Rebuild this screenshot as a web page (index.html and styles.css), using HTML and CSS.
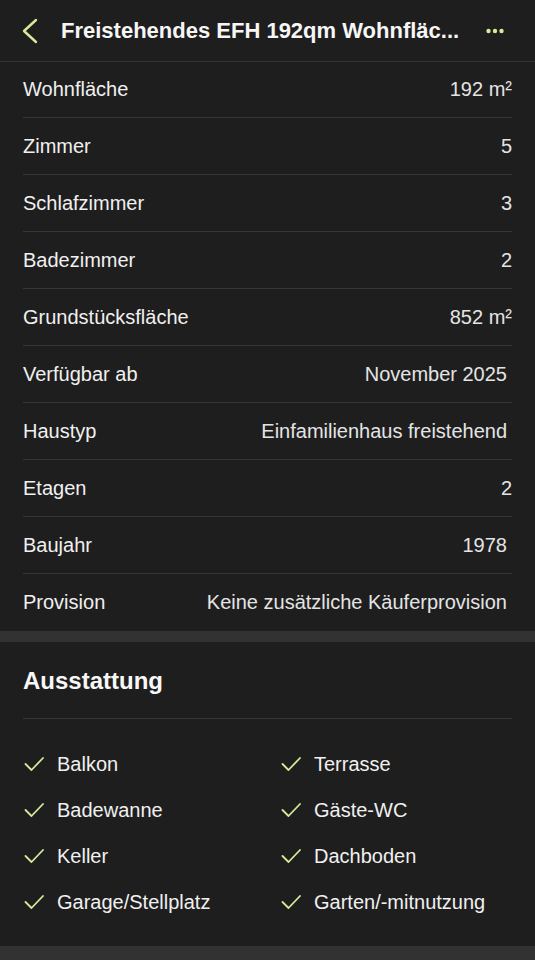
FILE: index.html
```html
<!DOCTYPE html>
<html lang="de">
<head>
<meta charset="utf-8">
<title>Freistehendes EFH</title>
<link rel="stylesheet" href="styles.css">
</head>
<body>
<header class="topbar">
  <svg class="back" width="18" height="26" viewBox="0 0 18 26"><path d="M15 2 L3 13 L15 24" fill="none" stroke="#d4eb9c" stroke-width="2.4" stroke-linecap="round" stroke-linejoin="round"/></svg>
  <h1 class="title">Freistehendes EFH 192qm Wohnfläc...</h1>
  <svg class="more" width="18" height="6" viewBox="0 0 18 6"><circle cx="2.5" cy="3" r="2.2" fill="#d4eb9c"/><circle cx="9" cy="3" r="2.2" fill="#d4eb9c"/><circle cx="15.5" cy="3" r="2.2" fill="#d4eb9c"/></svg>
</header>

<section class="specs">
  <div class="row"><span class="label">Wohnfläche</span><span class="value">192 m²</span></div>
  <div class="row"><span class="label">Zimmer</span><span class="value">5</span></div>
  <div class="row"><span class="label">Schlafzimmer</span><span class="value">3</span></div>
  <div class="row"><span class="label">Badezimmer</span><span class="value">2</span></div>
  <div class="row"><span class="label">Grundstücksfläche</span><span class="value">852 m²</span></div>
  <div class="row"><span class="label">Verfügbar ab</span><span class="value pad">November 2025</span></div>
  <div class="row"><span class="label">Haustyp</span><span class="value pad">Einfamilienhaus freistehend</span></div>
  <div class="row"><span class="label">Etagen</span><span class="value">2</span></div>
  <div class="row"><span class="label">Baujahr</span><span class="value pad">1978</span></div>
  <div class="row"><span class="label">Provision</span><span class="value pad">Keine zusätzliche Käuferprovision</span></div>
</section>

<div class="band"></div>

<section class="features">
  <h2 class="heading">Ausstattung</h2>
  <div class="list">
    <div class="item"><svg class="check" width="20" height="16" viewBox="0 0 20 16"><path d="M1.5 8 L7.5 14 L19 2" fill="none" stroke="#d4eb9c" stroke-width="1.8" stroke-linecap="round" stroke-linejoin="round"/></svg><span>Balkon</span></div>
    <div class="item"><svg class="check" width="20" height="16" viewBox="0 0 20 16"><path d="M1.5 8 L7.5 14 L19 2" fill="none" stroke="#d4eb9c" stroke-width="1.8" stroke-linecap="round" stroke-linejoin="round"/></svg><span>Terrasse</span></div>
    <div class="item"><svg class="check" width="20" height="16" viewBox="0 0 20 16"><path d="M1.5 8 L7.5 14 L19 2" fill="none" stroke="#d4eb9c" stroke-width="1.8" stroke-linecap="round" stroke-linejoin="round"/></svg><span>Badewanne</span></div>
    <div class="item"><svg class="check" width="20" height="16" viewBox="0 0 20 16"><path d="M1.5 8 L7.5 14 L19 2" fill="none" stroke="#d4eb9c" stroke-width="1.8" stroke-linecap="round" stroke-linejoin="round"/></svg><span>Gäste-WC</span></div>
    <div class="item"><svg class="check" width="20" height="16" viewBox="0 0 20 16"><path d="M1.5 8 L7.5 14 L19 2" fill="none" stroke="#d4eb9c" stroke-width="1.8" stroke-linecap="round" stroke-linejoin="round"/></svg><span>Keller</span></div>
    <div class="item"><svg class="check" width="20" height="16" viewBox="0 0 20 16"><path d="M1.5 8 L7.5 14 L19 2" fill="none" stroke="#d4eb9c" stroke-width="1.8" stroke-linecap="round" stroke-linejoin="round"/></svg><span>Dachboden</span></div>
    <div class="item"><svg class="check" width="20" height="16" viewBox="0 0 20 16"><path d="M1.5 8 L7.5 14 L19 2" fill="none" stroke="#d4eb9c" stroke-width="1.8" stroke-linecap="round" stroke-linejoin="round"/></svg><span>Garage/Stellplatz</span></div>
    <div class="item"><svg class="check" width="20" height="16" viewBox="0 0 20 16"><path d="M1.5 8 L7.5 14 L19 2" fill="none" stroke="#d4eb9c" stroke-width="1.8" stroke-linecap="round" stroke-linejoin="round"/></svg><span>Garten/-mitnutzung</span></div>
  </div>
</section>

<div class="band"></div>
</body>
</html>
```

FILE: styles.css
```css
* { box-sizing: border-box; }
html, body {
  margin: 0;
  padding: 0;
  background: #1f1e1e;
  color: #f2f2f2;
  font-family: "Liberation Sans", Arial, sans-serif;
}
body { width: 535px; height: 960px; overflow: hidden; }

.topbar {
  height: 62px;
  border-bottom: 1px solid #343333;
  display: flex;
  align-items: center;
  padding: 0 0 0 21px;
}
.back { flex: none; margin-top: 1px; }
.title {
  margin: 0 0 0 22px;
  font-size: 22px;
  font-weight: 700;
  color: #f6f6f6;
  white-space: nowrap;
  flex: 1;
}
.more { flex: none; margin: 1px 31px 0 0; }

.specs { padding: 0 23px; }
.row {
  height: 57px;
  border-bottom: 1px solid #373636;
  display: flex;
  align-items: center;
  justify-content: space-between;
  font-size: 20px;
}
.row:first-child { height: 56px; }
.row:last-child { border-bottom: none; }
.label { color: #f0f0f0; }
.value { color: #e4e4e4; }
.value.pad { padding-right: 5px; }

.band { height: 11px; background: #333232; }
.band:last-child { height: 14px; }

.features { padding: 0 23px; }
.heading {
  margin: 0;
  padding: 24px 0 22px;
  line-height: 30px;
  font-size: 24px;
  font-weight: 700;
  color: #f8f8f8;
  border-bottom: 1px solid #373636;
}
.list {
  display: grid;
  grid-template-columns: 1fr 1fr;
  column-gap: 25px;
  padding: 22px 0 21px;
}
.item {
  height: 46px;
  display: flex;
  align-items: center;
  font-size: 20px;
  color: #f0f0f0;
}
.check { flex: none; margin: 0 13px 0 1px; }
```
